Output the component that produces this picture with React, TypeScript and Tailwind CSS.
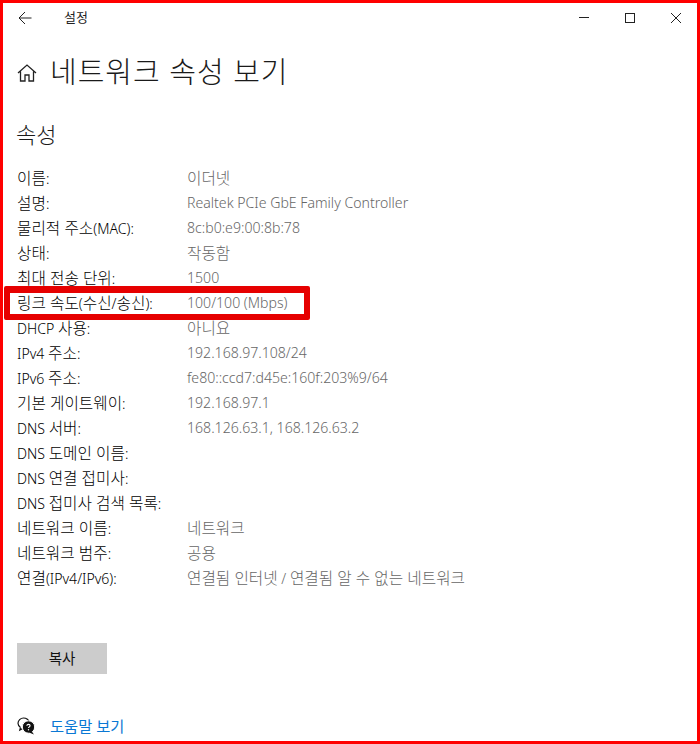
import React from "react";

const rows: [string, string][] = [
  ["이름:", "이더넷"],
  ["설명:", "Realtek PCIe GbE Family Controller"],
  ["물리적 주소(MAC):", "8c:b0:e9:00:8b:78"],
  ["상태:", "작동함"],
  ["최대 전송 단위:", "1500"],
  ["링크 속도(수신/송신):", "100/100 (Mbps)"],
  ["DHCP 사용:", "아니요"],
  ["IPv4 주소:", "192.168.97.108/24"],
  ["IPv6 주소:", "fe80::ccd7:d45e:160f:203%9/64"],
  ["기본 게이트웨이:", "192.168.97.1"],
  ["DNS 서버:", "168.126.63.1, 168.126.63.2"],
  ["DNS 도메인 이름:", ""],
  ["DNS 연결 접미사:", ""],
  ["DNS 접미사 검색 목록:", ""],
  ["네트워크 이름:", "네트워크"],
  ["네트워크 범주:", "공용"],
  ["연결(IPv4/IPv6):", "연결됨 인터넷 / 연결됨 알 수 없는 네트워크"],
];

const font = "font-['Noto_Sans','Noto_Sans_CJK_KR',sans-serif]";

// hangul runs sit a little larger than the latin ones, as in the reference
function Mixed({ text }: { text: string }) {
  const parts = text.split(/([\uAC00-\uD7A3]+(?: [\uAC00-\uD7A3]+)*)/);
  return (
    <>
      {parts.map((part, i) =>
        i % 2 === 1 ? (
          <span key={i} className="text-[15.700px]">
            {part}
          </span>
        ) : (
          <span key={i}>{part}</span>
        )
      )}
    </>
  );
}

export default function App() {
  return (
    <div className={`relative flex h-[744px] w-[700px] flex-col overflow-hidden border-[3px] border-[#ff0000] bg-white text-black ${font}`}>
      {/* title bar */}
      <div className="flex h-[29px] shrink-0 items-center">
        <svg width="14" height="14" viewBox="0 0 14 14" className="ml-[15px]" fill="none" stroke="#222" strokeWidth="1">
          <path d="M1 7h12.500M7 1 1 7l6 6" />
        </svg>
        <span className="ml-[32px] text-[13px] leading-none text-[#222]">설정</span>
        <div className="ml-auto flex items-center">
          <div className="mr-[36px] h-px w-[10px] bg-[#222]" />
          <div className="mr-[36px] h-[10px] w-[10px] border border-[#222]" />
          <svg width="10" height="10" viewBox="0 0 10 10" className="mr-[16px]" fill="none" stroke="#222" strokeWidth="1">
            <path d="M0 0l10 10M10 0 0 10" />
          </svg>
        </div>
      </div>

      {/* page heading */}
      <div className="mt-[13px] flex h-[52px] shrink-0 items-center">
        <svg width="20" height="20" viewBox="0 0 20 20" className="ml-[14px] mt-[4px]" fill="none" stroke="#222" strokeWidth="1.300">
          <path d="M1 10 10 2l9 8M3.500 8.500V18h4.500v-6h4v6h4.500V8.500" />
        </svg>
        <h1 className="ml-[13px] text-[29px] font-light leading-none tracking-[1px] text-[#1a1a1a]">네트워크 속성 보기</h1>
      </div>

      <h2 className="ml-[13px] mt-[23px] h-[28px] shrink-0 text-[22px] font-light leading-[28px] text-[#1a1a1a]">속성</h2>

      {/* properties */}
      <div className="ml-[14px] mt-[18px] flex shrink-0 flex-col">
        {rows.map(([label, value]) => (
          <div key={label} className="flex h-[25px] items-center text-[14.100px] font-light leading-none">
            <span className="w-[170px] shrink-0 whitespace-nowrap text-[#000]">
              <Mixed text={label} />
            </span>
            <span className="whitespace-nowrap text-[#666]">
              <Mixed text={value} />
            </span>
          </div>
        ))}
      </div>

      <button className="ml-[14px] mt-[52px] h-[31px] w-[90px] shrink-0 bg-[#cccccc] text-[14.500px] text-[#111]">복사</button>

      {/* help link */}
      <div className="ml-[14px] mt-[41px] flex shrink-0 items-center">
        <svg width="18" height="18" viewBox="0 0 18 18" fill="none">
          <path d="M3.500 10.500C2 9.500 1 8 1 6.300 1 3.400 3.500 1 6.500 1S12 3 12 5M3.500 10.500 2.800 13l3-1.500" stroke="#111" strokeWidth="1.200" />
          <circle cx="11.500" cy="10" r="6.200" fill="#111" stroke="#fff" strokeWidth="1" />
          <path d="M14.500 14l2.500 3.500-5-2z" fill="#111" />
          <path d="M9.900 8.800c0-.9.700-1.400 1.600-1.400s1.600.5 1.600 1.300c0 1.200-1.600 1.200-1.600 2.400" stroke="#fff" strokeWidth="1.100" />
          <circle cx="11.500" cy="12.700" r=".7" fill="#fff" />
        </svg>
        <a className="ml-[15px] text-[15.300px] text-[#0a78d4]">도움말 보기</a>
      </div>

      {/* red highlight drawn over the link speed row */}
      <div className="absolute left-[1px] top-[283px] h-[34px] w-[306px] rounded-[2px] border-[6px] border-t-[7px] border-[#e60000]" />
    </div>
  );
}
